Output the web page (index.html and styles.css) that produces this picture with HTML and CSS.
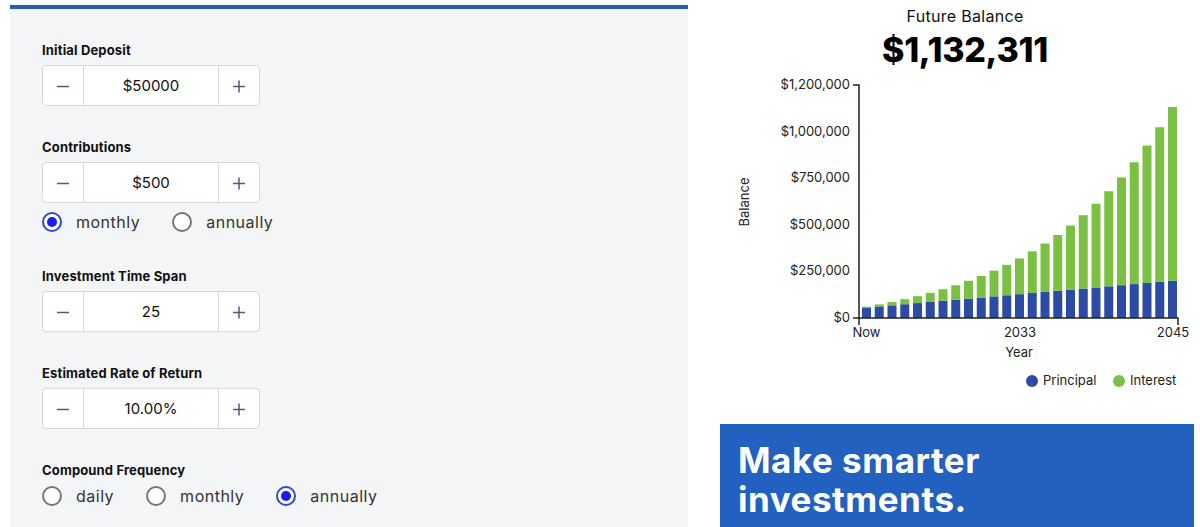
FILE: index.html
```html
<!DOCTYPE html>
<html lang="en">
<head>
<meta charset="utf-8">
<title>Compound Interest Calculator</title>
<link rel="stylesheet" href="styles.css">
</head>
<body>
<div class="page">
  <section class="calc">
    <div class="field">
      <div class="label">Initial Deposit</div>
      <div class="stepper">
        <button class="btn" aria-label="decrease"><svg width="14" height="14" viewBox="0 0 14 14"><path d="M1 7.5H13" class="ic"/></svg></button>
        <div class="value">$50000</div>
        <button class="btn" aria-label="increase"><svg width="14" height="14" viewBox="0 0 14 14"><path d="M1 7.5H13M7 1.5V13.5" class="ic"/></svg></button>
      </div>
    </div>
    <div class="field with-radios">
      <div class="label">Contributions</div>
      <div class="stepper">
        <button class="btn" aria-label="decrease"><svg width="14" height="14" viewBox="0 0 14 14"><path d="M1 7.5H13" class="ic"/></svg></button>
        <div class="value">$500</div>
        <button class="btn" aria-label="increase"><svg width="14" height="14" viewBox="0 0 14 14"><path d="M1 7.5H13M7 1.5V13.5" class="ic"/></svg></button>
      </div>
      <div class="radios">
        <div class="radio"><span class="dot on"></span>monthly</div>
        <div class="radio"><span class="dot"></span>annually</div>
      </div>
    </div>
    <div class="field">
      <div class="label">Investment Time Span</div>
      <div class="stepper">
        <button class="btn" aria-label="decrease"><svg width="14" height="14" viewBox="0 0 14 14"><path d="M1 7.5H13" class="ic"/></svg></button>
        <div class="value">25</div>
        <button class="btn" aria-label="increase"><svg width="14" height="14" viewBox="0 0 14 14"><path d="M1 7.5H13M7 1.5V13.5" class="ic"/></svg></button>
      </div>
    </div>
    <div class="field">
      <div class="label">Estimated Rate of Return</div>
      <div class="stepper">
        <button class="btn" aria-label="decrease"><svg width="14" height="14" viewBox="0 0 14 14"><path d="M1 7.5H13" class="ic"/></svg></button>
        <div class="value">10.00%</div>
        <button class="btn" aria-label="increase"><svg width="14" height="14" viewBox="0 0 14 14"><path d="M1 7.5H13M7 1.5V13.5" class="ic"/></svg></button>
      </div>
    </div>
    <div class="field last">
      <div class="label">Compound Frequency</div>
      <div class="radios tight">
        <div class="radio"><span class="dot"></span>daily</div>
        <div class="radio"><span class="dot"></span>monthly</div>
        <div class="radio"><span class="dot on"></span>annually</div>
      </div>
    </div>
  </section>

  <aside class="results">
    <div class="title">Future Balance</div>
    <div class="amount">$1,132,311</div>
    <svg class="chart" width="474" height="330" viewBox="720 70 474 330">
      <g class="bars">
        <rect class="p" x="862" y="307.56" width="9" height="10.44"/><rect class="i" x="862" y="306.63" width="9" height="0.93"/>
        <rect class="p" x="874.75" y="306.44" width="9" height="11.56"/><rect class="i" x="874.75" y="304.37" width="9" height="2.07"/>
        <rect class="p" x="887.5" y="305.32" width="9" height="12.68"/><rect class="i" x="887.5" y="301.89" width="9" height="3.43"/>
        <rect class="p" x="900.25" y="304.21" width="9" height="13.79"/><rect class="i" x="900.25" y="299.16" width="9" height="5.05"/>
        <rect class="p" x="913" y="303.09" width="9" height="14.91"/><rect class="i" x="913" y="296.16" width="9" height="6.93"/>
        <rect class="p" x="925.75" y="301.97" width="9" height="16.03"/><rect class="i" x="925.75" y="292.86" width="9" height="9.11"/>
        <rect class="p" x="938.5" y="300.85" width="9" height="17.15"/><rect class="i" x="938.5" y="289.23" width="9" height="11.62"/>
        <rect class="p" x="951.25" y="299.73" width="9" height="18.27"/><rect class="i" x="951.25" y="285.23" width="9" height="14.5"/>
        <rect class="p" x="964" y="298.61" width="9" height="19.39"/><rect class="i" x="964" y="280.84" width="9" height="17.77"/>
        <rect class="p" x="976.75" y="297.5" width="9" height="20.5"/><rect class="i" x="976.75" y="276" width="9" height="21.5"/>
        <rect class="p" x="989.5" y="296.38" width="9" height="21.62"/><rect class="i" x="989.5" y="270.68" width="9" height="25.7"/>
        <rect class="p" x="1002.25" y="295.26" width="9" height="22.74"/><rect class="i" x="1002.25" y="264.83" width="9" height="30.43"/>
        <rect class="p" x="1015" y="294.14" width="9" height="23.86"/><rect class="i" x="1015" y="258.4" width="9" height="35.74"/>
        <rect class="p" x="1027.75" y="293.02" width="9" height="24.98"/><rect class="i" x="1027.75" y="251.32" width="9" height="41.7"/>
        <rect class="p" x="1040.5" y="291.9" width="9" height="26.1"/><rect class="i" x="1040.5" y="243.53" width="9" height="48.37"/>
        <rect class="p" x="1053.25" y="290.79" width="9" height="27.21"/><rect class="i" x="1053.25" y="234.97" width="9" height="55.82"/>
        <rect class="p" x="1066" y="289.67" width="9" height="28.33"/><rect class="i" x="1066" y="225.55" width="9" height="64.12"/>
        <rect class="p" x="1078.75" y="288.55" width="9" height="29.45"/><rect class="i" x="1078.75" y="215.18" width="9" height="73.37"/>
        <rect class="p" x="1091.5" y="287.43" width="9" height="30.57"/><rect class="i" x="1091.5" y="203.78" width="9" height="83.65"/>
        <rect class="p" x="1104.25" y="286.31" width="9" height="31.69"/><rect class="i" x="1104.25" y="191.24" width="9" height="95.07"/>
        <rect class="p" x="1117" y="285.19" width="9" height="32.81"/><rect class="i" x="1117" y="177.45" width="9" height="107.74"/>
        <rect class="p" x="1129.75" y="284.08" width="9" height="33.92"/><rect class="i" x="1129.75" y="162.28" width="9" height="121.8"/>
        <rect class="p" x="1142.5" y="282.96" width="9" height="35.04"/><rect class="i" x="1142.5" y="145.58" width="9" height="137.38"/>
        <rect class="p" x="1155.25" y="281.84" width="9" height="36.16"/><rect class="i" x="1155.25" y="127.22" width="9" height="154.62"/>
        <rect class="p" x="1168" y="280.72" width="9" height="37.28"/><rect class="i" x="1168" y="106.94" width="9" height="173.78"/>
      </g>
      <path class="axis" d="M853 85H859V318H853"/>
      <path class="axis" d="M859 325V318H1178V325"/>
      <g class="tick yt">
        <text x="850" y="85">$1,200,000</text>
        <text x="850" y="132.5">$1,000,000</text>
        <text x="850" y="178.5">$750,000</text>
        <text x="850" y="225.5">$500,000</text>
        <text x="850" y="271.5">$250,000</text>
        <text x="850" y="318">$0</text>
      </g>
      <g class="tick xt">
        <text x="866.5" y="333">Now</text>
        <text x="1020" y="333">2033</text>
        <text x="1173" y="333">2045</text>
        <text x="1019" y="353">Year</text>
      </g>
      <text class="tick ylabel" transform="translate(745 202) rotate(-90)">Balance</text>
      <circle cx="1032" cy="381" r="6" class="lp"/>
      <text class="tick legend" x="1043" y="381">Principal</text>
      <circle cx="1119" cy="381" r="6" class="li"/>
      <text class="tick legend" x="1130" y="381">Interest</text>
    </svg>
    <div class="cta">Make smarter<br>investments.</div>
  </aside>
</div>
</body>
</html>
```

FILE: styles.css
```css
body {
  margin: 0;
  background: #ffffff;
  font-family: Inter, "Noto Sans", sans-serif;
  color: #111;
  overflow: hidden;
}

.page {
  display: flex;
  align-items: flex-start;
}

.calc {
  margin: 5px 0 0 10px;
  width: 678px;
  flex: none;
  box-sizing: border-box;
  background: #f4f5f7;
  border-top: 4px solid #2a5db0;
  padding: 33px 32px 80px;
}

.field {
  margin-bottom: 33px;
}

.field.with-radios {
  margin-bottom: 36px;
}

.field.last {
  margin-bottom: 0;
}

.label {
  font-size: 13px;
  font-weight: 700;
  line-height: 16px;
  letter-spacing: 0.15px;
  color: #111;
}

.stepper {
  margin-top: 7px;
  display: flex;
  width: 218px;
  height: 41px;
  box-sizing: border-box;
  border: 1px solid #d5d8dc;
  border-radius: 4px;
  background: #fff;
}

.btn {
  width: 40px;
  flex: none;
  border: 0;
  padding: 0;
  background: none;
  display: flex;
  align-items: center;
  justify-content: center;
}

.ic {
  stroke: #4f5b7c;
  stroke-width: 1.5;
  fill: none;
}

.value {
  flex: 1;
  border-left: 1px solid #d5d8dc;
  border-right: 1px solid #d5d8dc;
  display: flex;
  align-items: center;
  justify-content: center;
  font-size: 15px;
  color: #111;
}

.radios {
  margin-top: 9px;
  display: flex;
  gap: 32px;
  height: 20px;
  align-items: center;
}

.radios.tight {
  margin-top: 8px;
}

.radio {
  display: flex;
  align-items: center;
  gap: 14px;
  font-size: 16px;
  letter-spacing: 0.5px;
  color: #333;
}

.dot {
  width: 20px;
  height: 20px;
  box-sizing: border-box;
  border: 2px solid #767676;
  border-radius: 50%;
  background: #fff;
  display: flex;
  align-items: center;
  justify-content: center;
}

.dot.on {
  border-color: #2b48d6;
}

.dot.on::after {
  content: "";
  width: 10px;
  height: 10px;
  border-radius: 50%;
  background: #1c1cf0;
}

.results {
  flex: 1;
  display: flex;
  flex-direction: column;
  padding: 6px 6px 0 32px;
}

.title {
  text-align: center;
  font-size: 16px;
  line-height: 20px;
  letter-spacing: 0.3px;
  padding-left: 16px;
  color: #111;
}

.amount {
  text-align: center;
  font-size: 34px;
  font-weight: 800;
  line-height: 40px;
  margin-top: 4px;
  padding-left: 16px;
  color: #000;
  letter-spacing: -0.3px;
}

.chart {
  display: block;
}

.bars .p {
  fill: #2d4ba5;
}

.bars .i {
  fill: #7ac143;
}

.axis {
  fill: none;
  stroke: #222;
  stroke-width: 1.5;
}

.tick {
  font-family: Inter, "Noto Sans", sans-serif;
  font-size: 13px;
  fill: #222;
  dominant-baseline: middle;
}

.yt text {
  text-anchor: end;
}

.xt text {
  text-anchor: middle;
}

.ylabel {
  text-anchor: middle;
}

.lp {
  fill: #2d4ba5;
}

.li {
  fill: #7ac143;
}

.cta {
  margin-top: 24px;
  background: #2261c0;
  color: #fff;
  font-size: 35px;
  font-weight: 700;
  line-height: 39px;
  letter-spacing: 0.5px;
  padding: 17px 18px 30px;
}
```
